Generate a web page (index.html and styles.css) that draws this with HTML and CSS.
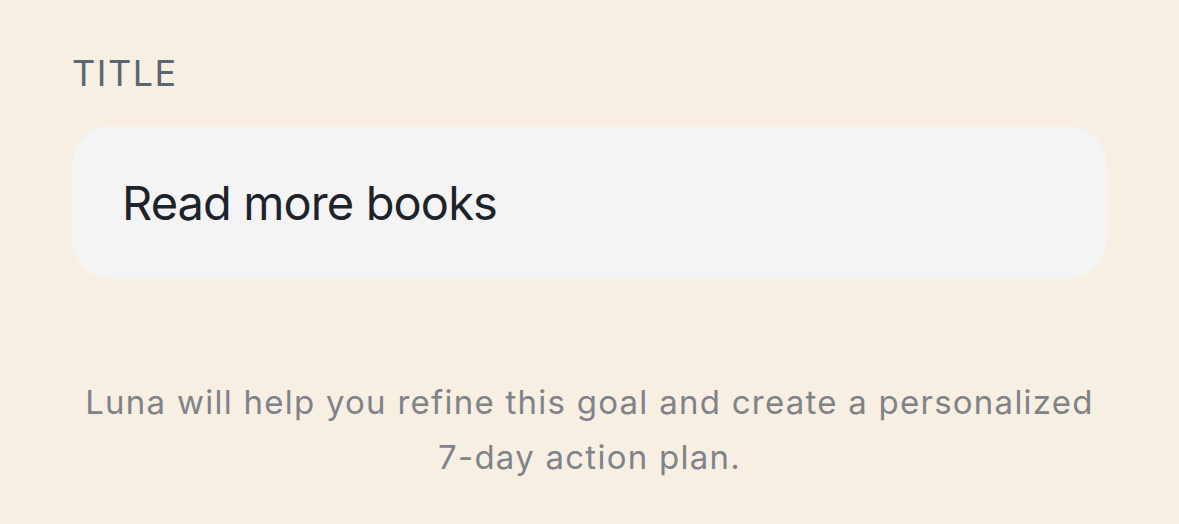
FILE: index.html
```html
<!DOCTYPE html>
<html>
<head>
<meta charset="utf-8">
<link rel="stylesheet" href="styles.css">
</head>
<body>
<div class="page">
  <div class="label">TITLE</div>
  <div class="field">Read more books</div>
  <p class="hint">Luna will help you refine this goal and create a personalized 7-day action plan.</p>
</div>
</body>
</html>
```
FILE: styles.css
```css
html, body {
  margin: 0;
  padding: 0;
  background: #f8efe3;
}
.page {
  padding: 51px 72px 0 72px;
  font-family: Inter, "Noto Sans", sans-serif;
}
.label {
  font-size: 36px;
  letter-spacing: 1.5px;
  color: #5d6570;
  line-height: 44px;
  margin-bottom: 31px;
}
.field {
  background: #f4f4f4;
  border-radius: 40px;
  height: 153px;
  display: flex;
  align-items: center;
  padding: 0 50px;
  font-size: 47px;
  letter-spacing: -0.9px;
  color: #1c232b;
}
.hint {
  margin: 96px 0 0 0;
  text-align: center;
  font-size: 33px;
  letter-spacing: 1.25px;
  line-height: 55px;
  color: #7f8388;
}
```
